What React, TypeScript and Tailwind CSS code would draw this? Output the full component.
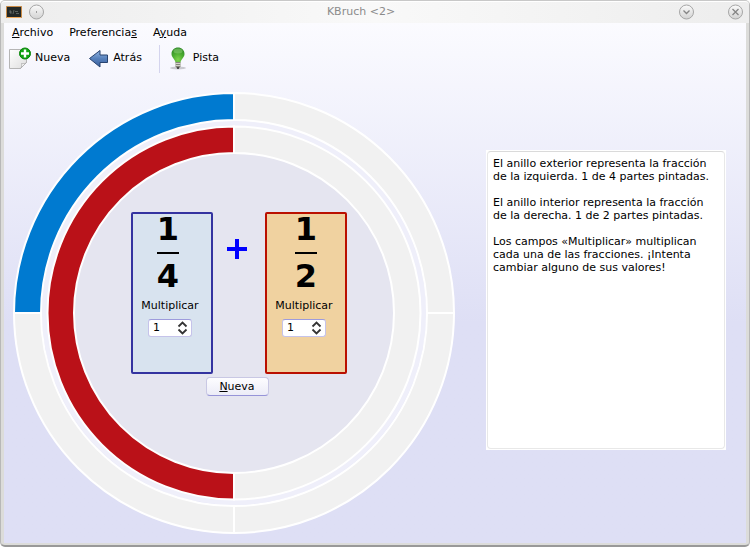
import { useState } from "react";

const CENTER = 221;

function sector(inner: number, outer: number, from: number, to: number) {
  const point = (radius: number, turn: number) => {
    const angle = turn * 2 * Math.PI;
    return `${CENTER - radius * Math.sin(angle)} ${CENTER - radius * Math.cos(angle)}`;
  };
  const large = to - from > 0.5 ? 1 : 0;
  return `M${point(outer, from)} A${outer} ${outer} 0 ${large} 0 ${point(outer, to)} L${point(inner, to)} A${inner} ${inner} 0 ${large} 1 ${point(inner, from)} Z`;
}

type RingProps = { inner: number; outer: number; parts: number; painted: number; color: string };

function Ring({ inner, outer, parts, painted, color }: RingProps) {
  return (
    <g stroke="#ffffff" strokeWidth="2">
      {Array.from({ length: parts }, (_, i) => (
        <path key={i} d={sector(inner, outer, i / parts, (i + 1) / parts)} fill={i < painted ? color : "#f1f1f1"} />
      ))}
    </g>
  );
}

function Rings({ left, right }: { left: number; right: number }) {
  return (
    <svg viewBox="0 0 442 442" className="absolute inset-0 h-full w-full" aria-hidden="true">
      <circle cx={CENTER} cy={CENTER} r="192" fill="#efeffa" />
      <circle cx={CENTER} cy={CENTER} r="160" fill="#e5e5f0" />
      <Ring inner={193} outer={220} parts={4 * left} painted={left} color="#007ad0" />
      <Ring inner={160} outer={186.5} parts={2 * right} painted={right} color="#ba1118" />
    </svg>
  );
}

type CardProps = {
  id: string;
  top: number;
  bottom: number;
  factor: number;
  onFactor: (value: number) => void;
  frame: string;
  fractionClass: string;
};

function FractionCard({ id, top, bottom, factor, onFactor, frame, fractionClass }: CardProps) {
  const change = (value: number) => onFactor(Math.min(9, Math.max(1, value || 1)));
  return (
    <section className={`flex h-[162px] w-[82px] flex-col rounded-[2px] border-2 ${frame}`}>
      <div className={`flex flex-col items-center text-[32px] font-bold leading-[30px] ${fractionClass}`}>
        <span>{top * factor}</span>
        <span className="mt-2 h-0.5 w-[22px] bg-black" />
        <span className="mt-[7px]">{bottom * factor}</span>
      </div>
      <div className="flex flex-col items-center pr-1 pt-2">
        <label htmlFor={id} className="leading-[13px]">
          Multiplicar
        </label>
        <div className="mt-[7px] flex h-[18px] w-11 items-center rounded-[3px] border border-[#c5c3ea] border-t-[#9d9bdc] bg-white">
          <input
            id={id}
            type="number"
            min={1}
            max={9}
            value={factor}
            onChange={(event) => change(Number(event.target.value))}
            className="h-4 w-7 min-w-0 appearance-none bg-transparent pl-1 leading-4 outline-none [-moz-appearance:textfield] [&::-webkit-inner-spin-button]:appearance-none [&::-webkit-outer-spin-button]:appearance-none"
          />
          <div className="flex w-3 flex-col">
            <button type="button" aria-label="Aumentar" className="h-[7px]" onClick={() => change(factor + 1)}>
              <svg viewBox="0 0 12 7" className="h-[7px] w-3" fill="none" stroke="#333" strokeWidth="1.8">
                <path d="M1.500 5.500 5.500 1.500l4 4" />
              </svg>
            </button>
            <button type="button" aria-label="Disminuir" className="h-[7px]" onClick={() => change(factor - 1)}>
              <svg viewBox="0 0 12 7" className="h-[7px] w-3" fill="none" stroke="#333" strokeWidth="1.8">
                <path d="M1.500 1.500l4 4 4-4" />
              </svg>
            </button>
          </div>
        </div>
      </div>
    </section>
  );
}

function BoardIcon() {
  return (
    <svg viewBox="0 0 16 12" className="h-3 w-4" aria-hidden="true">
      <path d="M.5.5h15v11H.5z" fill="#222827" stroke="#c98a45" />
      <path d="M1 11.5h14" stroke="#f0a95a" />
      <path d="M3 6h3M4 4l1 4M8 4l-1 4M9 5.500h3M10 7.500h3" stroke="#727a77" strokeWidth=".7" fill="none" />
    </svg>
  );
}

function NewIcon() {
  return (
    <svg viewBox="0 0 24 24" className="h-6 w-6" aria-hidden="true">
      <defs>
        <linearGradient id="sheet" x1="0" y1="0" x2="1" y2="1">
          <stop offset="0" stopColor="#fff" />
          <stop offset="1" stopColor="#dedede" />
        </linearGradient>
      </defs>
      <path d="M1.500 2.500h17v13l-6 6h-11z" fill="url(#sheet)" stroke="#b5b5b5" />
      <path d="M12.500 21.500c1.500-2 1.500-3 1-5 2 .5 3.500.3 5-1z" fill="#fff" stroke="#a9a9a9" strokeWidth=".8" />
      <circle cx="17" cy="6.500" r="5.500" fill="#12a312" stroke="#078407" />
      <path d="M17 2.500v8M13 6.500h8" stroke="#fff" strokeWidth="2.400" />
    </svg>
  );
}

function BackIcon() {
  return (
    <svg viewBox="0 0 22 20" className="h-5 w-[22px]" aria-hidden="true">
      <defs>
        <linearGradient id="arrow" x1="0" y1="0" x2="0" y2="1">
          <stop offset="0" stopColor="#93b5e3" />
          <stop offset=".5" stopColor="#5680bb" />
          <stop offset="1" stopColor="#3a609d" />
        </linearGradient>
      </defs>
      <path d="M1.500 9.500 12 1.500V6h7.500v7.500H12V18z" fill="url(#arrow)" stroke="#27426f" strokeLinejoin="round" />
    </svg>
  );
}

function BulbIcon() {
  return (
    <svg viewBox="0 0 18 24" className="h-6 w-[18px]" aria-hidden="true">
      <defs>
        <radialGradient id="bulb" cx=".5" cy=".8" r=".8">
          <stop offset="0" stopColor="#7fd44c" />
          <stop offset=".5" stopColor="#4dae31" />
          <stop offset="1" stopColor="#2f8928" />
        </radialGradient>
      </defs>
      <ellipse cx="9" cy="21" rx="8" ry="1.500" fill="#c9c9cf" />
      <path d="M6.500 15.500C6 12 2.500 10.500 2.500 7 2.500 3 5.500.5 9 .5s6.500 2.500 6.500 6.500c0 3.500-3.500 5-4 8.500z" fill="url(#bulb)" />
      <ellipse cx="9" cy="4" rx="4.500" ry="2.500" fill="#8fcf78" opacity=".5" />
      <path d="M6.500 15h5v4.500L10 21.500H8l-1.500-2z" fill="#85857b" />
      <path d="M6.500 16.500h5M6.500 18.500h5" stroke="#d2d2c8" />
      <path d="M8 21h2" stroke="#333" strokeWidth="1.500" />
    </svg>
  );
}

function TitleButton({ label, path }: { label: string; path: string }) {
  return (
    <button type="button" aria-label={label} className="h-4 w-4">
      <svg viewBox="0 0 16 16" className="h-4 w-4" fill="none">
        <defs>
          <linearGradient id="knob" x1="0" y1="0" x2="0" y2="1">
            <stop offset="0" stopColor="#fbfbfb" />
            <stop offset="1" stopColor="#d2d2d2" />
          </linearGradient>
        </defs>
        <circle cx="7.500" cy="8" r="7" fill="url(#knob)" stroke="#a6a6a6" />
        <path d={path} stroke="#858585" strokeWidth="1.300" />
      </svg>
    </button>
  );
}

export default function App() {
  const [left, setLeft] = useState(1);
  const [right, setRight] = useState(1);
  const reset = () => {
    setLeft(1);
    setRight(1);
  };

  return (
    <div className="flex min-h-screen flex-col rounded-[5px] border border-b-2 border-[#b8b8b8] border-b-[#999] border-t-[#c8c8c8] bg-[#dcdcda] font-['DejaVu_Sans',sans-serif] text-[11px] text-black">
      <header className="flex h-[22px] items-center rounded-t-[4px] border-t border-white bg-linear-to-r from-[#ededed] via-[#f9f9f9] to-[#ededed] px-[5px]">
        <div className="flex flex-1 items-center gap-[7px] pb-0.5">
          <BoardIcon />
          <TitleButton label="En todos los escritorios" path="M7 8h1" />
        </div>
        <h1 className="pr-7 text-[#8b8b8b]">KBruch &lt;2&gt;</h1>
        <div className="flex flex-1 items-center justify-end gap-[33px] pb-0.5">
          <TitleButton label="Minimizar" path="M4.500 6.500l3 3 3-3" />
          <TitleButton label="Cerrar" path="M4.500 5l6 6M10.500 5l-6 6" />
        </div>
      </header>

      <div className="mx-[3px] mb-0.5 flex flex-1 flex-col bg-[#dedff5] bg-linear-to-b from-[#fbfbff] to-[#dedff5] to-[300px]">
        <nav className="flex h-5 items-center gap-4 px-2">
          <button type="button">
            <u>A</u>rchivo
          </button>
          <button type="button">
            Preferencia<u>s</u>
          </button>
          <button type="button">
            A<u>y</u>uda
          </button>
        </nav>

        <div className="flex h-[31px] items-center pl-1" role="toolbar">
          <button type="button" className="flex items-center gap-[3px]" onClick={reset}>
            <NewIcon />
            Nueva
          </button>
          <button type="button" className="ml-[18px] flex items-center gap-[3px]">
            <BackIcon />
            Atrás
          </button>
          <span className="ml-[17px] h-7 w-px bg-[#d4d4ee]" />
          <button type="button" className="ml-[9px] flex items-center gap-[6px]">
            <BulbIcon />
            Pista
          </button>
        </div>

        <main className="flex flex-1 items-start gap-[31px] pb-2 pl-[9px] pr-5 pt-[18px]">
          <div className="relative h-[442px] w-[442px] shrink-0">
            <Rings left={left} right={right} />
            <div className="relative flex flex-col items-center pl-[10px] pt-[120px]">
              <div className="flex">
                <FractionCard
                  id="left-factor"
                  top={1}
                  bottom={4}
                  factor={left}
                  onFactor={setLeft}
                  frame="border-[#3433a0] bg-[#d8e3ef]"
                  fractionClass="pr-2"
                />
                <svg viewBox="0 0 52 74" className="h-[74px] w-[52px]" role="img" aria-label="más">
                  <path d="M24 27v20M14 37h20" stroke="#0000ff" strokeWidth="4" />
                </svg>
                <FractionCard
                  id="right-factor"
                  top={1}
                  bottom={2}
                  factor={right}
                  onFactor={setRight}
                  frame="border-[#ba1000] bg-[#f0d2a0]"
                  fractionClass="pr-0"
                />
              </div>
              <button
                type="button"
                onClick={reset}
                className="mr-1 mt-[3px] h-[19px] w-[63px] rounded-[4px] border border-[#c9c8e4] border-b-[#9694d8] bg-linear-to-b from-[#fdfdff] to-[#ececf7] leading-[17px]"
              >
                <u>N</u>ueva
              </button>
            </div>
          </div>

          <div className="mt-[58px] h-[300px] min-w-0 flex-1 border border-white bg-white">
            <div className="flex h-full flex-col gap-[13px] rounded-[4px] border border-[#e8e8e8] border-t-[#dadada] px-[5px] py-[5px] leading-[13px]">
              <p>
                El anillo exterior representa la fracción
                <br />
                de la izquierda. {left} de {4 * left} partes pintadas.
              </p>
              <p>
                El anillo interior representa la fracción
                <br />
                de la derecha. {right} de {2 * right} partes pintadas.
              </p>
              <p>
                Los campos «Multiplicar» multiplican
                <br />
                cada una de las fracciones. ¡Intenta
                <br />
                cambiar alguno de sus valores!
              </p>
            </div>
          </div>
        </main>
      </div>
    </div>
  );
}
